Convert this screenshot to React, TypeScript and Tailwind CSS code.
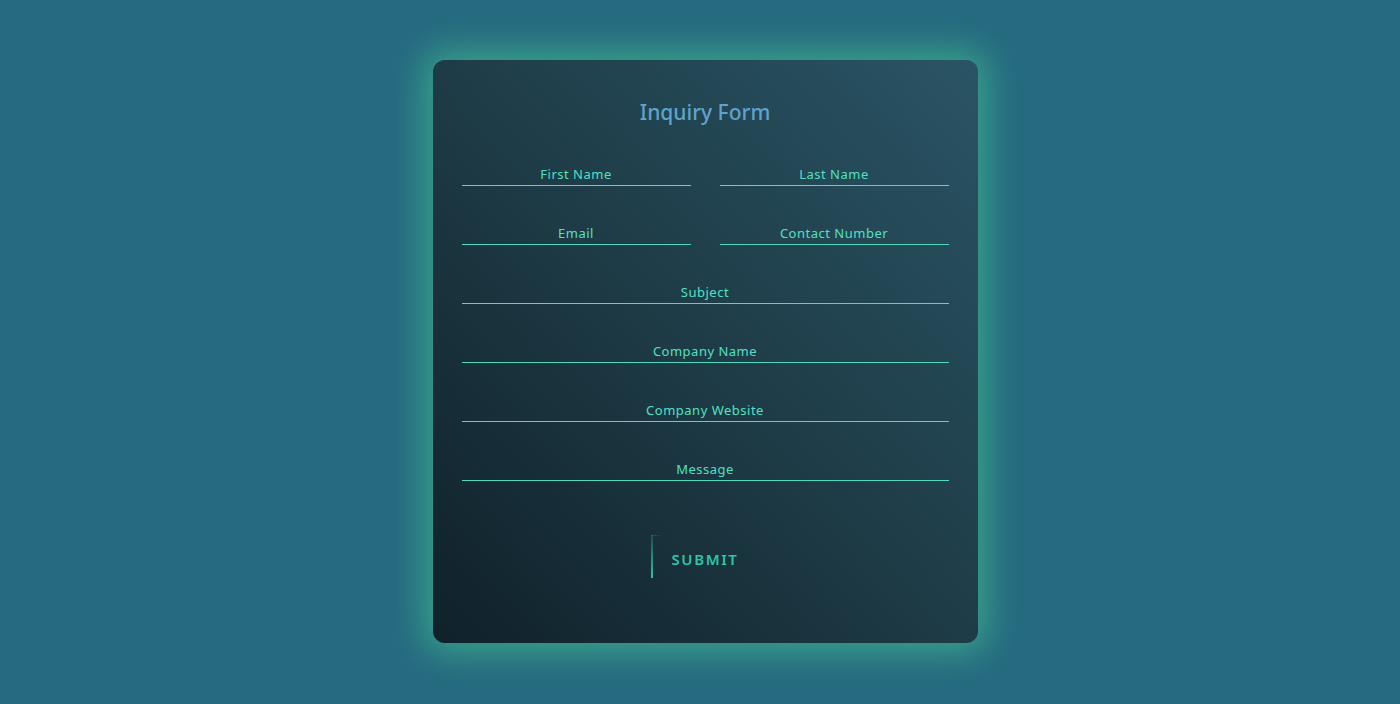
import React from "react";

const fields: { label: string; half?: boolean }[] = [
  { label: "First Name", half: true },
  { label: "Last Name", half: true },
  { label: "Email", half: true },
  { label: "Contact Number", half: true },
  { label: "Subject" },
  { label: "Company Name" },
  { label: "Company Website" },
  { label: "Message" },
];

function Field({ label, half }: { label: string; half?: boolean }) {
  return (
    <div className={half ? "col-span-1" : "col-span-2"}>
      <label className="relative flex h-[40px] items-end justify-center border-b border-[#4fd9bd]">
        <input className="absolute inset-0 bg-transparent outline-none" />
        <span className="pb-[3px] text-[13px] leading-[16px] tracking-[0.5px] text-[#52e0c2]">
          {label}
        </span>
      </label>
    </div>
  );
}

export default function App() {
  return (
    <div
      className="flex h-[704px] w-full items-start justify-center bg-[#266a80] pl-[10px] pt-[60px]"
      style={{ fontFamily: '"Noto Sans", Inter, sans-serif' }}
    >
      <div className="h-[583px] w-[545px] rounded-[12px] bg-gradient-to-tr from-[#10212a] via-[#1e3c47] to-[#2a5465] px-[29px] pt-[36px] shadow-[0_0_34px_10px_rgba(60,175,140,0.8)]">
        <h1 className="text-center text-[21px] font-medium leading-[32px] text-[#5ea3cc]">
          Inquiry Form
        </h1>
        <form className="mt-[18px] grid grid-cols-2 gap-x-[29px] gap-y-[19px]">
          {fields.map((f) => (
            <Field key={f.label} label={f.label} half={f.half} />
          ))}
          <div className="col-span-2 mt-[35px] flex justify-center">
            <button
              type="button"
              className="relative h-[43px] w-[108px] pt-[6px] text-[15px] font-semibold tracking-[1.6px] text-[#2fc3a8]"
            >
              <span className="absolute left-0 top-0 h-full w-[2px] bg-gradient-to-t from-[#2fc3a8] to-[#2fc3a8]/20" />
              <span className="absolute left-0 top-0 h-[1px] w-[12px] bg-gradient-to-r from-[#2fc3a8]/30 to-transparent" />
              SUBMIT
            </button>
          </div>
        </form>
      </div>
    </div>
  );
}
